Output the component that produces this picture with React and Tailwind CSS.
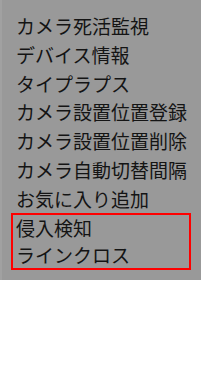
const items = [
  'カメラ死活監視',
  'デバイス情報',
  'タイプラプス',
  'カメラ設置位置登録',
  'カメラ設置位置削除',
  'カメラ自動切替間隔',
  'お気に入り追加',
]

const marked = ['侵入検知', 'ラインクロス']

export default function App() {
  return (
    <div
      className="w-[201px] bg-[#999999] border-l-2 border-[#a1a1a1] pt-3 pb-[10px] text-[19px] leading-[28.75px] text-[#141414]"
      style={{ fontFamily: '"Noto Sans CJK JP", "Noto Sans", sans-serif' }}
    >
      {items.map((t) => (
        <div key={t} className="pl-[14px] whitespace-nowrap">{t}</div>
      ))}
      <div className="ml-[9px] mr-[10px] border-2 border-[#ff0000]">
        {marked.map((t) => (
          <div key={t} className="pl-[3px] leading-[26.5px] whitespace-nowrap">{t}</div>
        ))}
      </div>
    </div>
  )
}
